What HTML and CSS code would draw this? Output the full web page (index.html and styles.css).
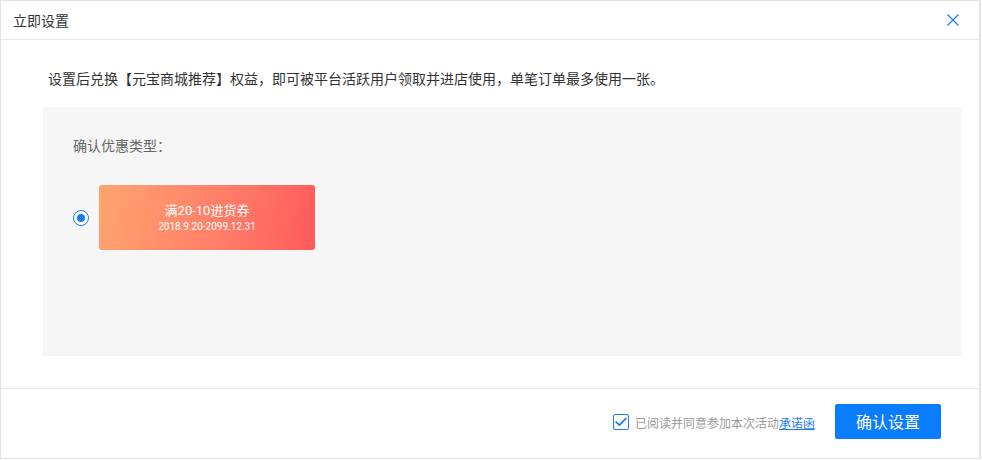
FILE: index.html
```html
<!DOCTYPE html>
<html lang="zh-CN">
<head>
<meta charset="utf-8">
<title>立即设置</title>
<link rel="stylesheet" href="styles.css">
</head>
<body>
<div class="dialog">
  <div class="header">
    <span class="title">立即设置</span>
    <svg class="close" width="12" height="12" viewBox="0 0 12 12"><path d="M0.5 0.5L11.5 11.5M11.5 0.5L0.5 11.5" stroke="#1a7cf5" stroke-width="1.3" fill="none"/></svg>
  </div>
  <div class="body">
    <p class="desc">设置后兑换【元宝商城推荐】权益，即可被平台活跃用户领取并进店使用，单笔订单最多使用一张。</p>
    <div class="panel">
      <div class="label">确认优惠类型：</div>
      <div class="option">
        <span class="radio"><span class="dot"></span></span>
        <div class="coupon">
          <div class="coupon-name">满20-10进货券</div>
          <div class="coupon-date">2018.9.20-2099.12.31</div>
        </div>
      </div>
    </div>
  </div>
  <div class="footer">
    <label class="agree">
      <span class="check"><svg width="12" height="10" viewBox="0 0 12 10"><path d="M1.2 5.2L4.5 8.2L10.8 1.5" stroke="#1a7cf5" stroke-width="1.8" fill="none" stroke-linecap="round" stroke-linejoin="round"/></svg></span>
      <span class="agree-text">已阅读并同意参加本次活动</span><a class="link" href="#">承诺函</a>
    </label>
    <button class="btn">确认设置</button>
  </div>
</div>
</body>
</html>
```
FILE: styles.css
```css
* { box-sizing: border-box; }
html, body { margin: 0; padding: 0; background: #fff; }
body { font-family: "PingFang SC", "Noto Sans CJK SC", "Noto Sans", sans-serif; color: #333; }
.dialog {
  width: 981px;
  height: 459px;
  border: 1px solid #e3e3e3;
  border-right-width: 2px;
  display: flex;
  flex-direction: column;
  background: #fff;
}
.header {
  height: 39px;
  border-bottom: 1px solid #e8e8e8;
  display: flex;
  align-items: center;
  justify-content: space-between;
  padding: 0 20px 0 12px;
}
.title { font-size: 14px; color: #333; line-height: 20px; }
.close { display: block; }
.body {
  padding: 0 18px 0 42px;
  height: 349px;
  border-bottom: 1px solid #e8e8e8;
}
.desc {
  margin: 0;
  padding: 27px 0 0 5px;
  height: 67px;
  font-size: 14px;
  line-height: 22px;
  color: #333;
}
.panel {
  height: 249px;
  background: #f6f6f6;
  padding: 27px 30px 0 30px;
}
.label { font-size: 14px; line-height: 22px; color: #666; }
.option {
  display: flex;
  align-items: center;
  margin-top: 29px;
}
.radio {
  width: 16px;
  height: 16px;
  border: 1.5px solid #1a7cf5;
  border-radius: 50%;
  display: flex;
  align-items: center;
  justify-content: center;
  background: #fff;
  margin-right: 10px;
}
.dot { width: 8px; height: 8px; border-radius: 50%; background: #1a7cf5; }
.coupon {
  width: 216px;
  height: 65px;
  border-radius: 3px;
  background: linear-gradient(100deg, #ffa46f 0%, #ff7f69 55%, #ff5a5a 100%);
  color: #fff;
  display: flex;
  flex-direction: column;
  align-items: center;
  justify-content: center;
  padding-bottom: 1px;
  font-family: Roboto, "Noto Sans CJK SC", sans-serif;
}
.coupon-name { font-size: 13px; line-height: 17px; }
.coupon-date { font-size: 10px; line-height: 13px; margin-top: 1px; }
.footer {
  flex: 1;
  display: flex;
  align-items: center;
  justify-content: flex-end;
  padding: 0 38px 5px 0;
}
.agree {
  display: flex;
  align-items: center;
  font-size: 12px;
  color: #999;
  margin-right: 20px;
  margin-top: 2px;
}
.check {
  width: 16px;
  height: 16px;
  border: 1.3px solid #1a7cf5;
  border-radius: 2px;
  display: flex;
  align-items: center;
  justify-content: center;
  margin-right: 6px;
}
.check svg { display: block; }
.agree-text { color: #999; }
.link { color: #1a7cf5; text-decoration: underline; }
.btn {
  width: 106px;
  height: 35px;
  border: none;
  border-radius: 2px;
  background: #0a7cff;
  color: #fff;
  font-family: inherit;
  font-size: 16px;
  padding: 0;
}
```
